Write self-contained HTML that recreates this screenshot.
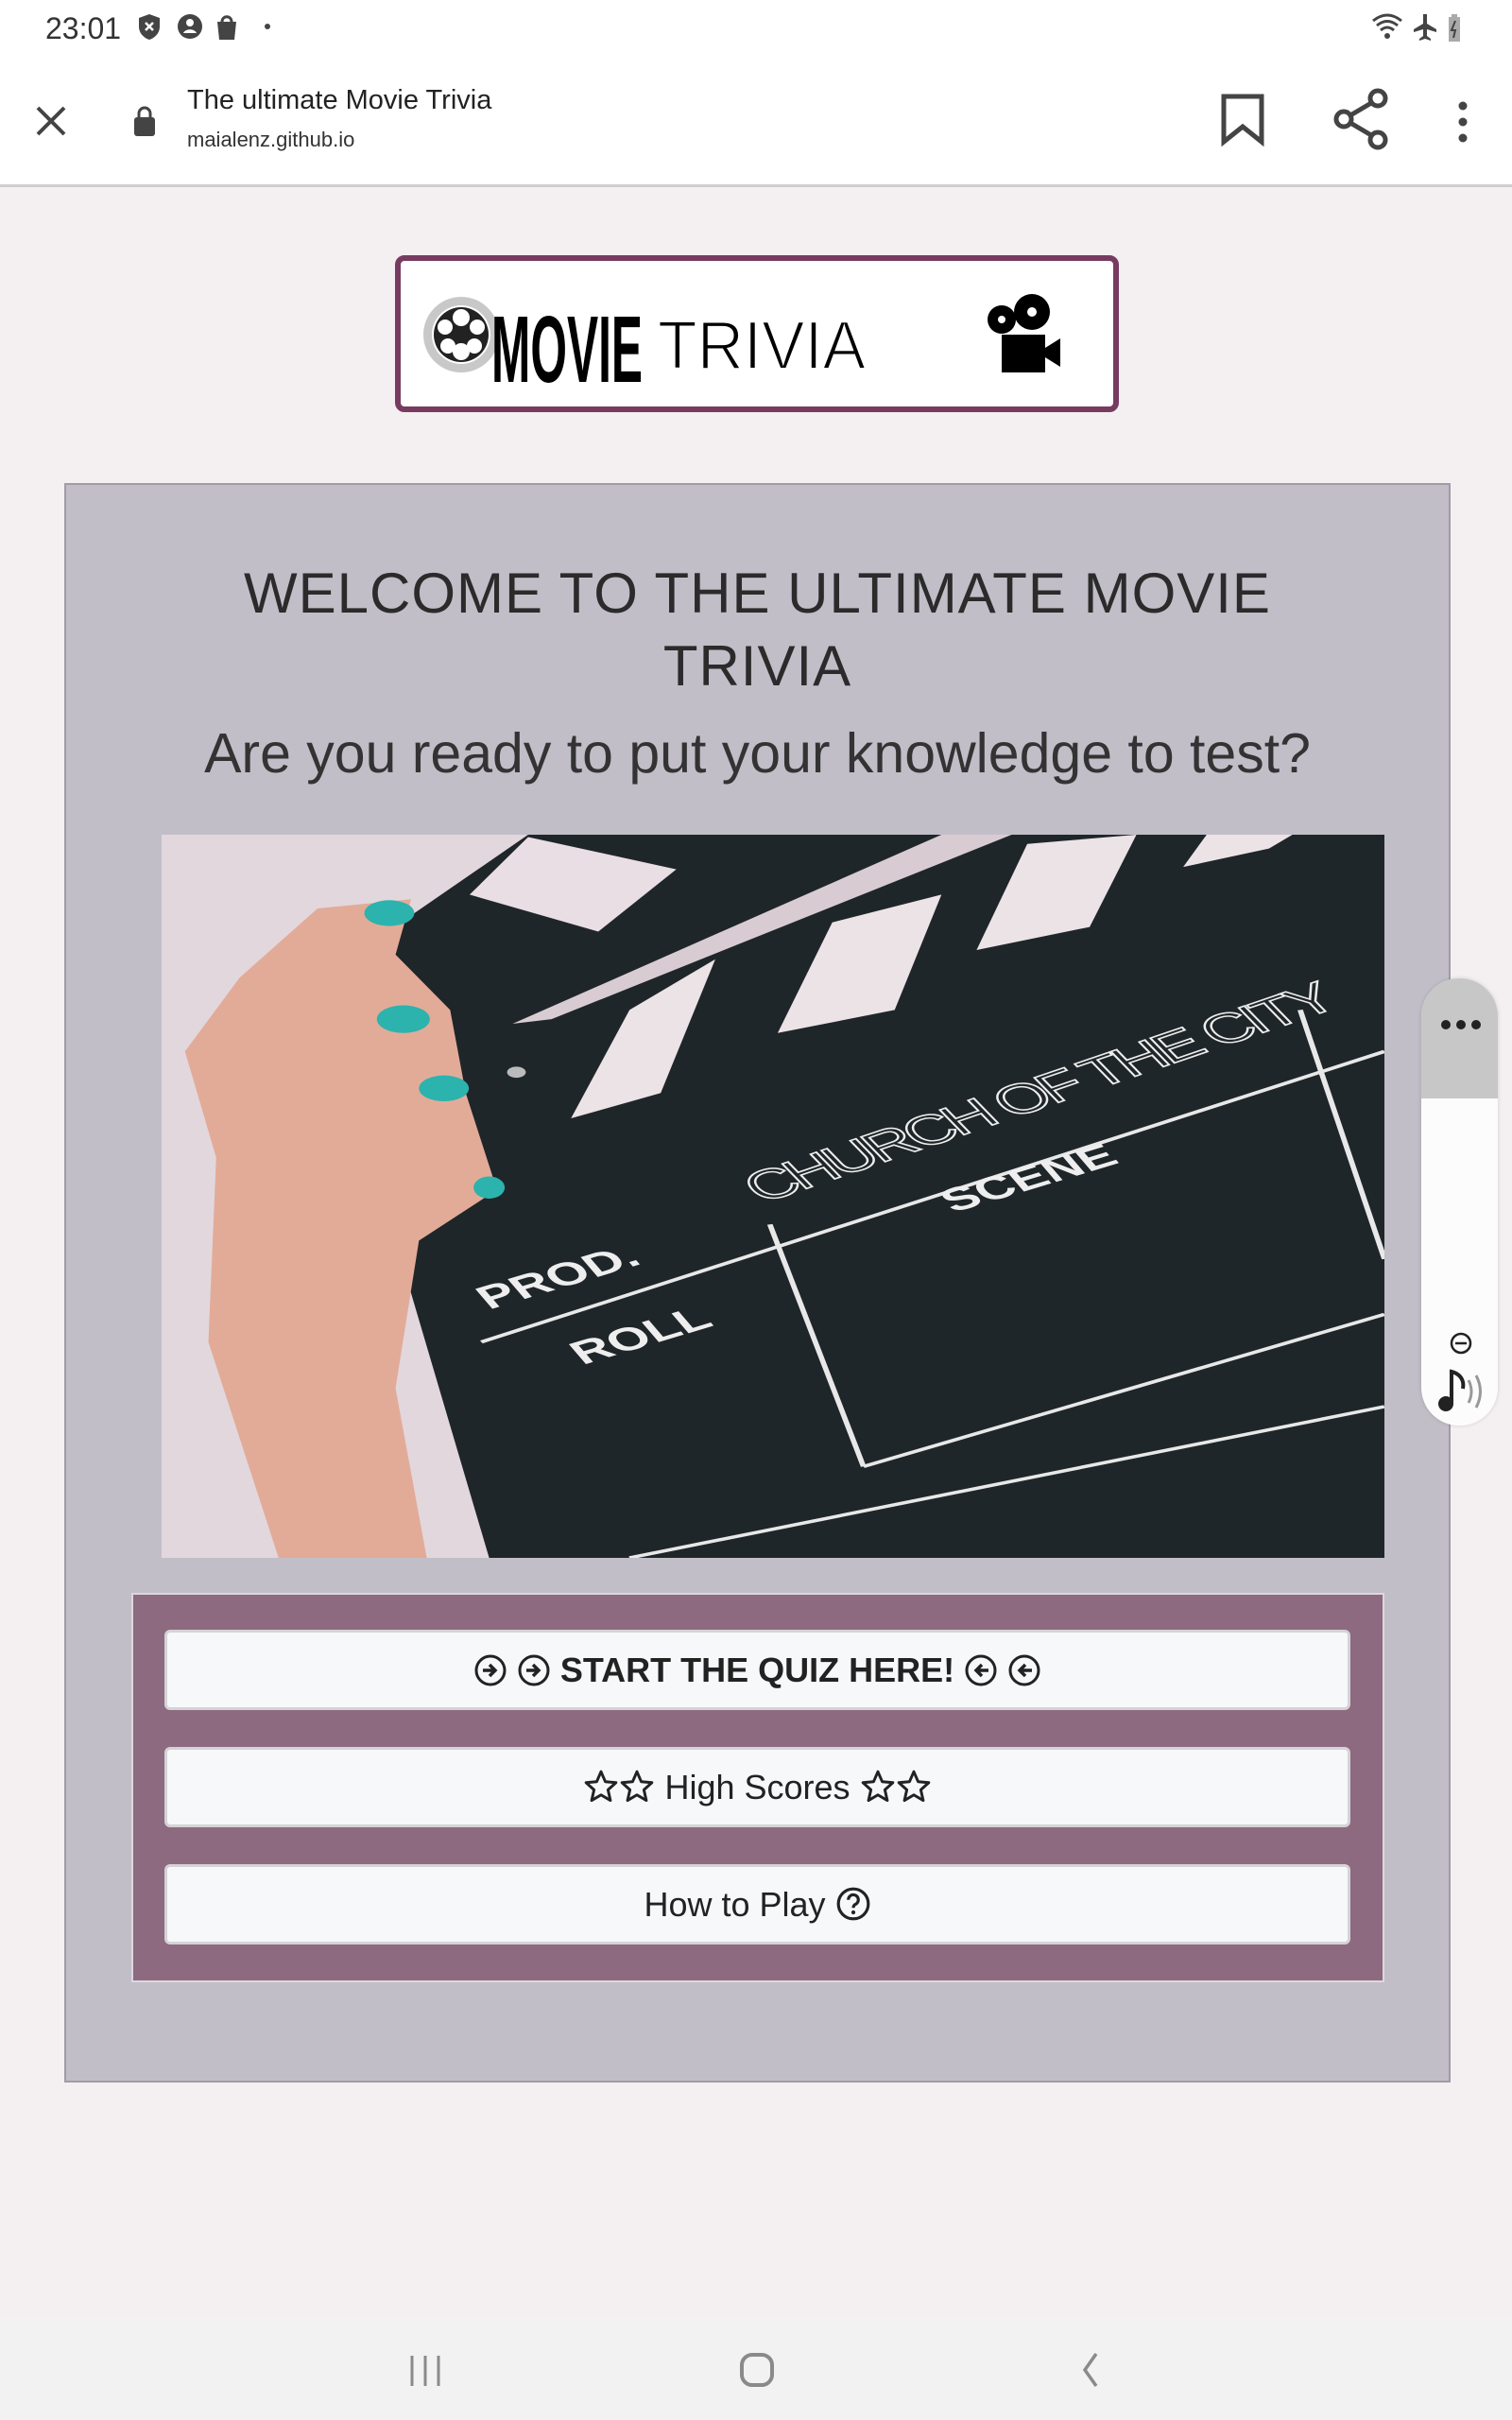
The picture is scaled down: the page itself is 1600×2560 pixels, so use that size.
<!DOCTYPE html>
<html><head><meta charset="utf-8">
<style>
*{margin:0;padding:0;box-sizing:border-box}
body{width:1600px;height:2560px;background:#f4f0f2;font-family:"Liberation Sans",sans-serif;position:relative;overflow:hidden}
.abs{position:absolute}
#status{left:0;top:0;width:1600px;height:60px;background:#fff}
#toolbar{left:0;top:60px;width:1600px;height:138px;background:#fff;border-bottom:3px solid #cfcfcf}
#logo{left:418px;top:270px;width:766px;height:166px;border:6px solid #773b60;border-radius:10px;background:#fff}
#panel{left:68px;top:511px;width:1467px;height:1692px;background:#c1bec8;border:2px solid #a09ca6}
h1{position:absolute;left:0;width:100%;text-align:center;font-weight:normal;color:#2b2b2b;font-size:60px;line-height:77px;top:76px;letter-spacing:1px}
.sub{position:absolute;left:0;width:100%;text-align:center;color:#333;font-size:59px;top:250px}
#img{left:171px;top:883px;width:1294px;height:765px}
#btnbox{left:139px;top:1685px;width:1326px;height:412px;background:#8d6a7f;border:2px solid #ddd8dd}
.btn{position:absolute;left:174px;width:1255px;height:85px;background:#f7f8fa;border:3px solid #d5d3d7;border-radius:6px;text-align:center;font-size:36px;line-height:79px;color:#222}
.btn svg{vertical-align:-6px}
#widget{left:1504px;top:1035px;width:81px;height:473px;border-radius:40px;background:#fcfcfc;box-shadow:0 0 4px rgba(0,0,0,.15);overflow:hidden}
#nav{left:0;top:2452px;width:1600px;height:108px;background:#f2f2f2}
</style></head><body>
<svg width="0" height="0" style="position:absolute">
 <defs>
  <symbol id="ar" viewBox="0 0 36 36"><circle cx="18" cy="18" r="15" stroke="#222" stroke-width="3" fill="none"/><path d="M10 18h12M17 12l6 6-6 6" stroke="#222" stroke-width="3.5" fill="none"/></symbol>
  <symbol id="al" viewBox="0 0 36 36"><circle cx="18" cy="18" r="15" stroke="#222" stroke-width="3" fill="none"/><path d="M26 18H14M19 12l-6 6 6 6" stroke="#222" stroke-width="3.5" fill="none"/></symbol>
  <symbol id="st" viewBox="0 0 36 36"><path d="M18 3l4.3 10 10.7 1-8 7.2 2.4 10.6L18 26.3 8.6 31.8 11 21.2 3 14l10.7-1z" stroke="#222" stroke-width="2.8" fill="none" stroke-linejoin="round"/></symbol>
  <symbol id="q" viewBox="0 0 36 36"><circle cx="18" cy="18" r="15" stroke="#222" stroke-width="3" fill="none"/><path d="M13 14a5 5 0 1 1 7 4.5c-1.5.8-2 1.6-2 3.5" stroke="#222" stroke-width="3" fill="none"/><circle cx="18" cy="26.5" r="2" fill="#222"/></symbol>
 </defs>
</svg>
<div id="status" class="abs">
 <div class="abs" style="left:48px;top:12px;font-size:32px;color:#333">23:01</div>
 <svg class="abs" style="left:146px;top:14px" width="140" height="30" viewBox="0 0 140 30">
  <path d="M12 1 L23 5 V14 C23 21 18 26 12 28 C6 26 1 21 1 14 V5Z" fill="#444"/><path d="M8 10l8 8M16 10l-8 8" stroke="#fff" stroke-width="2.5"/>
  <circle cx="55" cy="14" r="13" fill="#444"/><circle cx="55" cy="10" r="4" fill="#fff"/><path d="M48 21c2-5 12-5 14 0" fill="#fff"/>
  <path d="M84 9h20l-2 19h-16z" fill="#444"/><path d="M89 9c0-7 10-7 10 0" stroke="#444" stroke-width="3" fill="none"/>
  <circle cx="137" cy="14" r="3" fill="#444"/>
 </svg>
 <svg class="abs" style="left:1450px;top:12px" width="110" height="34" viewBox="0 0 110 34">
  <path d="M3 10 Q18 -2 33 10M7 15Q18 6 29 15M11 20Q18 14 25 20" stroke="#444" stroke-width="3" fill="none"/><circle cx="18" cy="26" r="3" fill="#444"/>
  <path d="M56 3v10l-10 6v3l10-3v7l-4 3v2l6-2 6 2v-2l-4-3v-7l10 3v-3l-10-6V3z" fill="#444"/>
  <rect x="83" y="6" width="12" height="26" fill="#aaa"/><rect x="86" y="3" width="6" height="4" fill="#aaa"/><path d="M90 10l-4 10h4l-2 8" stroke="#444" stroke-width="2" fill="none"/>
 </svg>
</div>
<div id="toolbar" class="abs">
 <svg class="abs" style="left:36px;top:50px" width="36" height="36"><path d="M4 4l28 28M32 4L4 32" stroke="#444" stroke-width="4"/></svg>
 <svg class="abs" style="left:140px;top:50px" width="26" height="36"><rect x="2" y="14" width="22" height="20" rx="3" fill="#444"/><path d="M7 15V10a6 6 0 0 1 12 0v5" stroke="#444" stroke-width="3" fill="none"/></svg>
 <div class="abs" style="left:198px;top:30px;font-size:29px;color:#222">The ultimate Movie Trivia</div>
 <div class="abs" style="left:198px;top:75px;font-size:22px;color:#333">maialenz.github.io</div>
 <svg class="abs" style="left:1290px;top:36px" width="50" height="60"><path d="M5 6v48l20-16 20 16V6z" stroke="#444" stroke-width="5" fill="none"/></svg>
 <svg class="abs" style="left:1408px;top:32px" width="70" height="68"><circle cx="50" cy="12" r="8" stroke="#444" stroke-width="5" fill="none"/><circle cx="14" cy="34" r="8" stroke="#444" stroke-width="5" fill="none"/><circle cx="50" cy="56" r="8" stroke="#444" stroke-width="5" fill="none"/><path d="M21 30l22-13M21 38l22 13" stroke="#444" stroke-width="5"/></svg>
 <svg class="abs" style="left:1538px;top:44px" width="20" height="50"><circle cx="10" cy="8" r="4.5" fill="#444"/><circle cx="10" cy="25" r="4.5" fill="#444"/><circle cx="10" cy="42" r="4.5" fill="#444"/></svg>
</div>
<div id="logo" class="abs">
 <svg width="754" height="154" viewBox="0 0 754 154">
  <circle cx="64" cy="78" r="40" fill="#c8c8c8"/><circle cx="64" cy="78" r="31" fill="#fff"/>
  <circle cx="64" cy="78" r="29" fill="#222"/><circle cx="64" cy="60" r="9" fill="#fff"/><circle cx="64" cy="96" r="9" fill="#fff"/><circle cx="47" cy="70" r="8" fill="#fff"/><circle cx="81" cy="70" r="8" fill="#fff"/><circle cx="50" cy="90" r="8" fill="#fff"/><circle cx="78" cy="90" r="8" fill="#fff"/>
  <text x="96" y="128" font-family="Liberation Sans" font-weight="bold" font-size="100" fill="#000" textLength="160" lengthAdjust="spacingAndGlyphs">MOVIE</text>
  <text x="272" y="114" font-family="Liberation Sans" font-size="72" fill="#000" textLength="220" lengthAdjust="spacingAndGlyphs" stroke="#fff" stroke-width="2">TRIVIA</text>
  <circle cx="636" cy="62" r="15" fill="#000"/><circle cx="668" cy="54" r="19" fill="#000"/>
  <circle cx="636" cy="62" r="4" fill="#fff"/><circle cx="668" cy="54" r="5" fill="#fff"/>
  <rect x="636" y="78" width="46" height="40" fill="#000"/><path d="M682 92l16-10v30l-16-10z" fill="#000"/>
 </svg>
</div>
<div id="panel" class="abs">
 <h1>WELCOME TO THE ULTIMATE MOVIE<br>TRIVIA</h1>
 <div class="sub">Are you ready to put your knowledge to test?</div>
</div>
<svg id="img" class="abs" viewBox="0 0 1568 1568" preserveAspectRatio="none">
 <rect width="1568" height="1568" fill="#e2d7dd"/>
 <path d="M230 280L470 0H1568V1568H420L300 880Z" fill="#1f2629"/>
 <path d="M395 130L470 5L660 75L560 210Z" fill="#e8dee3"/>
 <path d="M450 410L1000 0H1090L500 400Z" fill="#d8ccd2"/>
 <path d="M525 615L600 380L710 270L640 560Z" fill="#ece3e7"/>
 <path d="M790 430L860 190L1000 130L940 380Z" fill="#ece3e7"/>
 <path d="M1045 250L1110 20L1250 0L1190 200Z" fill="#ece3e7"/>
 <path d="M1310 70L1340 0H1450L1420 30Z" fill="#ece3e7"/>
 <path d="M30 470L100 310L200 160L320 140L300 260L370 380L390 560L430 770L330 880L300 1200L340 1568H150L60 1100L70 700Z" fill="#e2ab98"/>
 <ellipse cx="292" cy="170" rx="32" ry="28" fill="#2cb3ad"/>
 <ellipse cx="310" cy="400" rx="34" ry="30" fill="#2cb3ad"/>
 <ellipse cx="362" cy="550" rx="32" ry="28" fill="#2cb3ad"/>
 <ellipse cx="420" cy="765" rx="20" ry="24" fill="#2cb3ad"/>
 <circle cx="455" cy="515" r="12" fill="#bbb"/>
 <g stroke="#e8e8e8" stroke-width="7" fill="none">
  <path d="M410 1100L1568 470"/><path d="M780 845L900 1370"/><path d="M1460 380L1568 920"/><path d="M900 1370L1568 1040"/><path d="M600 1568L1568 1240"/>
 </g>
 <g fill="#eee" font-family="Liberation Sans" font-weight="bold">
  <text x="420" y="1030" font-size="70" transform="rotate(-27 420 1030)">PROD.</text>
  <text x="540" y="1150" font-size="70" transform="rotate(-27 540 1150)">ROLL</text>
  <text x="1015" y="820" font-size="70" transform="rotate(-27 1015 820)">SCENE</text>
 </g>
 <text x="770" y="800" font-size="90" fill="none" stroke="#eee" stroke-width="3" font-family="Liberation Sans" transform="rotate(-30 770 800)" textLength="860" lengthAdjust="spacing">CHURCH OF THE CITY</text>
</svg>
<div id="btnbox" class="abs"></div>
<div class="btn" style="top:1724px;font-weight:bold"><svg width="36" height="36"><use href="#ar"/></svg> <svg width="36" height="36"><use href="#ar"/></svg> START THE QUIZ HERE! <svg width="36" height="36"><use href="#al"/></svg> <svg width="36" height="36"><use href="#al"/></svg></div>
<div class="btn" style="top:1848px"><svg width="38" height="38"><use href="#st"/></svg><svg width="38" height="38"><use href="#st"/></svg> High Scores <svg width="38" height="38"><use href="#st"/></svg><svg width="38" height="38"><use href="#st"/></svg></div>
<div class="btn" style="top:1972px">How to Play <svg width="38" height="38"><use href="#q"/></svg></div>
<div id="widget" class="abs">
 <div style="height:127px;background:#c7c7c7;position:relative">
  <svg class="abs" style="left:20px;top:42px" width="44" height="14"><circle cx="6" cy="7" r="5" fill="#222"/><circle cx="22" cy="7" r="5" fill="#222"/><circle cx="38" cy="7" r="5" fill="#222"/></svg>
 </div>
 <svg class="abs" style="left:16px;top:370px" width="52" height="100"><circle cx="26" cy="16" r="10" stroke="#222" stroke-width="2.5" fill="none"/><path d="M20 16h12" stroke="#222" stroke-width="2.5"/>
  <circle cx="10" cy="80" r="8" fill="#222"/><path d="M16 80V46c8 2 14 8 12 18" stroke="#222" stroke-width="4" fill="none"/>
  <path d="M34 55q6 12 0 24M42 50q9 17 0 34" stroke="#999" stroke-width="3" fill="none"/></svg>
</div>
<div id="nav" class="abs">
 <svg class="abs" style="left:432px;top:38px" width="36" height="36"><path d="M4 2v32M18 2v32M32 2v32" stroke="#8a8a8a" stroke-width="3"/></svg>
 <svg class="abs" style="left:782px;top:36px" width="38" height="38"><rect x="3" y="3" width="32" height="32" rx="11" stroke="#8a8a8a" stroke-width="4" fill="none"/></svg>
 <svg class="abs" style="left:1140px;top:36px" width="24" height="38"><path d="M20 2L8 19l12 17" stroke="#8a8a8a" stroke-width="3.5" fill="none"/></svg>
</div>
</body></html>
